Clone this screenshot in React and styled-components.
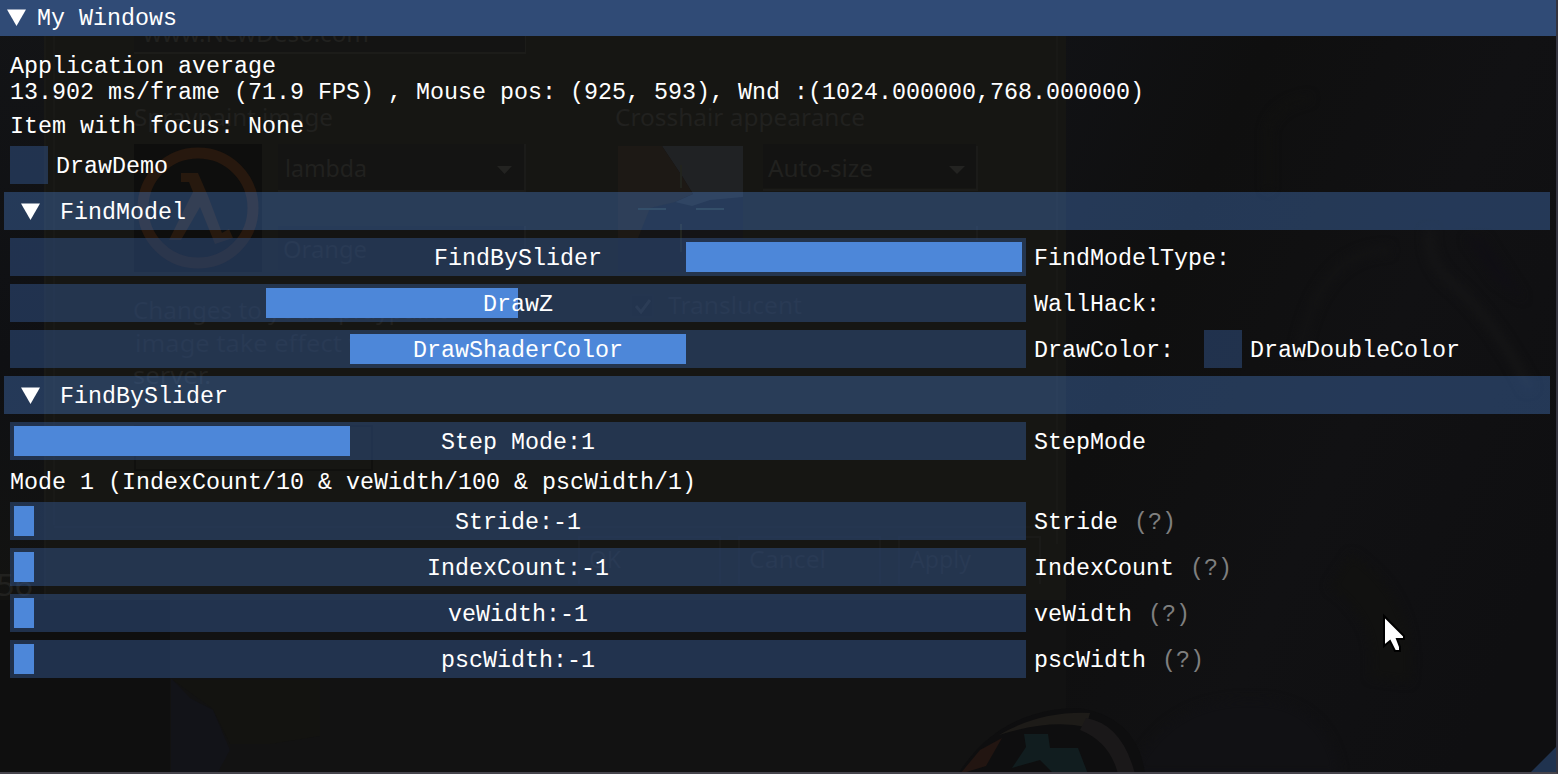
import React from "react";
import styled, { createGlobalStyle } from "styled-components";

const GlobalStyle = createGlobalStyle`
  * { box-sizing: border-box; }
  body { margin: 0; background: #111112; overflow: hidden; }
`;

const Window = styled.main`
  position: relative;
  width: 1558px;
  height: 774px;
  overflow: hidden;
  color: #fff;
  font-family: "Liberation Mono", monospace;
  font-size: 23.333px;
  white-space: pre;
  border-right: 2px solid #34343f;
  border-bottom: 2px solid #46444c;
`;

const Scene = styled.svg`
  position: absolute;
  left: 0;
  top: 0;
  font-family: "Noto Sans", sans-serif;
  font-size: 24px;
`;

const TitleBar = styled.header`
  position: relative;
  display: flex;
  align-items: flex-start;
  height: 36px;
  padding: 4px 7px;
  gap: 11px;
  background: #304b76;
`;

const Content = styled.div`
  position: relative;
  display: flex;
  flex-direction: column;
  gap: 8px;
  padding: 16px 10px 0;
`;

const Text = styled.span`
  display: block;
  height: ${(p) => (p.$lines || 1) * 26}px;
  line-height: 26px;
  padding-top: 2px;
  color: ${(p) => (p.$dim ? "#7f7f7f" : "#fff")};
`;

const Row = styled.div`
  display: flex;
  align-items: center;
  height: 38px;
  gap: 8px;
`;

const CheckBox = styled.span`
  width: 38px;
  height: 38px;
  background: rgba(48, 80, 130, 0.54);
  margin-left: ${(p) => p.$indent || 0}px;
`;

const SectionHeader = styled.div`
  display: flex;
  align-items: flex-start;
  gap: 20px;
  height: 38px;
  margin: 0 -4px 0 -6px;
  padding: 6px 17px;
  background: rgba(84, 150, 242, 0.31);
`;

const Track = styled.div`
  display: grid;
  align-items: center;
  width: 1016px;
  height: 38px;
  padding: 0 4px;
  background: rgba(48, 80, 130, 0.54);
  & > * { grid-area: 1 / 1; }
`;

const Grab = styled.span`
  width: ${(p) => p.$width}px;
  height: 30px;
  margin-left: ${(p) => p.$start}px;
  background: #4d87d9;
`;

const Value = styled(Text)`
  position: relative;
  justify-self: center;
`;

const Arrow = styled.svg`
  width: 19px;
  height: 17px;
  margin-top: 5px;
  flex: none;
`;

const Hint = styled(Text)`
  margin-left: 8px;
`;

const Grip = styled.svg`
  position: absolute;
  right: 0;
  bottom: 0;
`;

const Cursor = styled.svg`
  position: absolute;
  left: 1382px;
  top: 613px;
`;

function OpenArrow() {
  return (
    <Arrow viewBox="0 0 19 17">
      <path d="M0 .5H19L9.5 17Z" fill="#fff" />
    </Arrow>
  );
}

function Slider({ start, width, value, label, hint, children }) {
  return (
    <Row>
      <Track>
        <Grab $start={start} $width={width} />
        <Value>{value}</Value>
      </Track>
      <Text>{label}</Text>
      {hint && <Hint $dim>(?)</Hint>}
      {children}
    </Row>
  );
}

function Check({ label, indent }) {
  return (
    <>
      <CheckBox $indent={indent} />
      <Text>{label}</Text>
    </>
  );
}

function Section({ title }) {
  return (
    <SectionHeader>
      <OpenArrow />
      <Text>{title}</Text>
    </SectionHeader>
  );
}

const ghostLabels = [
  [143, 42, 226, "www.NewDeso.com"],
  [134, 126, 199, "Spraypaint image"],
  [615, 126, 250, "Crosshair appearance"],
  [285, 177, 82, "lambda"],
  [768, 177, 105, "Auto-size"],
  [283, 258, 84, "Orange"],
  [133, 319, 314, "Changes to your spraypaint"],
  [135, 352, 330, "image take effect when you"],
  [133, 384, 78, "server."],
  [668, 314, 134, "Translucent"],
  [589, 568, 32, "OK"],
  [749, 568, 77, "Cancel"],
  [910, 568, 61, "Apply"],
];

function GameScene() {
  return (
    <Scene width="1558" height="774" viewBox="0 0 1558 774">
      <defs>
        <linearGradient id="right" x1="0" y1="0" x2="1" y2=".7">
          <stop offset="0" stopColor="#111215" />
          <stop offset=".3" stopColor="#0f0f0f" />
          <stop offset=".65" stopColor="#111113" />
          <stop offset="1" stopColor="#0f0f11" />
        </linearGradient>
        <linearGradient id="left" x1="0" y1="0" x2="0" y2="1">
          <stop offset="0" stopColor="#131416" />
          <stop offset=".6" stopColor="#0f1013" />
          <stop offset="1" stopColor="#131311" />
        </linearGradient>
        <filter id="soft" colorInterpolationFilters="sRGB">
          <feGaussianBlur stdDeviation="5" />
        </filter>
      </defs>
      <rect width="1558" height="774" fill="#0f0f0f" />
      <rect width="45" height="600" fill="url(#left)" />
      <rect x="1066" width="492" height="774" fill="url(#right)" />
      <rect x="170" y="600" width="896" height="174" fill="#121212" />
      <g filter="url(#soft)" fill="none">
        <path d="M1268 190V130Q1275 104 1310 98" stroke="#121210" strokeWidth="5" />
        <path d="M1300 350Q1320 250 1390 250" stroke="#131314" strokeWidth="8" />
        <path d="M1430 230Q1425 265 1460 290Q1500 330 1530 390" stroke="#151516" strokeWidth="9" />
        <path d="M1465 238L1485 238L1525 300L1495 280Z" fill="#100f14" />
        <path d="M1340 570Q1400 610 1390 680" stroke="#111110" strokeWidth="40" />
        <path d="M1130 774Q1170 690 1270 700Q1330 710 1340 774" fill="#111114" />
      </g>
      <path d="M171 678L190 698L213 710L230 750L217 774H171Z" fill="#121318" />
      <path d="M173 680H320V736L270 744H230L213 709Z" fill="#131310" />
      <path d="M958 774Q1000 708 1080 708Q1138 718 1145 774Z" fill="#0e0e0f" />
      <path d="M999 735Q1040 711 1090 713L1086 727Q1050 719 999 735Z" fill="#1d1b18" />
      <path d="M1086 718Q1122 724 1135 774H1118Q1110 742 1080 730Z" fill="#1a1819" />
      <path d="M1024 734H1048L1050 748H1078L1088 774H1054L1040 760L1012 768L1026 747Z" fill="#111d1f" />
      <path d="M980 750L1002 738L986 766L960 774Z" fill="#221511" />

      <rect x="45" width="1021" height="600" fill="#161613" />
      <path d="M45 36V600M1057 0V544M54 0V525" stroke="#191916" strokeWidth="2" fill="none" />
      <path d="M134 53H525V36" stroke="#1c1c19" strokeWidth="2" fill="none" />
      <rect x="134" y="36" width="391" height="16" fill="#141413" />
      <path d="M54 527H1057" stroke="#181816" strokeWidth="2" />

      <rect x="134" y="144" width="128" height="128" fill="#0e0e0d" />
      <circle cx="198" cy="208" r="55" fill="none" stroke="#27180e" strokeWidth="11" />
      <path d="M181 173H198L208 196L222 233L229 229L233 238L215 244L200 207L181 240H169L193 192L189 182H181Z" fill="#27190e" />
      <rect x="278" y="144" width="247" height="47" fill="#141413" />
      <path d="M278 191H525V144" stroke="#1b1b19" strokeWidth="2" fill="none" />
      <path d="M497 166H512L504.500 174Z" fill="#232321" />
      <rect x="278" y="226" width="247" height="44" fill="#141413" />
      <path d="M525 226V270" stroke="#1b1b19" strokeWidth="2" />

      <rect x="618" y="146" width="125" height="126" fill="#141416" />
      <path d="M662 146H743V197L710 200L692 206L675 202L693 194L682 176Z" fill="#202224" />
      <path d="M618 146H662L682 176L693 194L675 202L650 208L638 238H618Z" fill="#1d1915" />
      <path d="M638 209H666M696 209H724" stroke="#26302e" strokeWidth="2" />
      <path d="M681 165V188M681 224V252" stroke="#22241e" strokeWidth="2" />
      <rect x="763" y="144" width="213" height="44" fill="#131312" />
      <path d="M763 190H977V146M977 226V240" stroke="#1b1b19" strokeWidth="2" fill="none" />
      <path d="M949 166H965L957 174Z" fill="#232321" />
      <rect x="631" y="295" width="22" height="22" fill="#141412" stroke="#191917" />
      <path d="M636 306L641 312L650 300" fill="none" stroke="#252523" strokeWidth="3" />
      <path d="M135 426H372V470H135Z" fill="#161613" stroke="#10100e" strokeWidth="2" />
      <path d="M579 584V537H720V584M739 584V537H880V584M899 584V537H1040V584" stroke="#1a1a18" strokeWidth="2" fill="none" />

      <g fill="#21211f">
        {ghostLabels.map(([x, y, w, label]) => (
          <text key={label} x={x} y={y} textLength={w} lengthAdjust="spacingAndGlyphs">
            {label}
          </text>
        ))}
        <text x="-4" y="596" fontSize="31" textLength="37" lengthAdjust="spacingAndGlyphs">56</text>
      </g>
    </Scene>
  );
}

export default function App() {
  return (
    <Window>
      <GlobalStyle />
      <GameScene />
      <TitleBar>
        <OpenArrow />
        <Text>My Windows</Text>
      </TitleBar>
      <Content>
        <Text $lines={2}>
          {"Application average\n13.902 ms/frame (71.9 FPS) , Mouse pos: (925, 593), Wnd :(1024.000000,768.000000)"}
        </Text>
        <Text>Item with focus: None</Text>
        <Row>
          <Check label="DrawDemo" />
        </Row>
        <Section title="FindModel" />
        <Slider start={672} width={336} value="FindBySlider" label="FindModelType:" />
        <Slider start={252} width={252} value="DrawZ" label="WallHack:" />
        <Slider start={336} width={336} value="DrawShaderColor" label="DrawColor:">
          <Check label="DrawDoubleColor" indent={22} />
        </Slider>
        <Section title="FindBySlider" />
        <Slider start={0} width={336} value="Step Mode:1" label="StepMode" />
        <Text>{"Mode 1 (IndexCount/10 & veWidth/100 & pscWidth/1)"}</Text>
        <Slider start={0} width={20} value="Stride:-1" label="Stride" hint />
        <Slider start={0} width={20} value="IndexCount:-1" label="IndexCount" hint />
        <Slider start={0} width={20} value="veWidth:-1" label="veWidth" hint />
        <Slider start={0} width={20} value="pscWidth:-1" label="pscWidth" hint />
      </Content>
      <Grip width="25" height="25" viewBox="0 0 25 25">
        <path d="M25 0V25H0Z" fill="#20334f" />
      </Grip>
      <Cursor width="24" height="40" viewBox="0 0 24 40">
        <path
          d="M2 3V33L8 28L13 38H18V34L15 26H22V23Z"
          fill="#fff"
          stroke="#000"
          strokeWidth="2"
        />
      </Cursor>
    </Window>
  );
}
